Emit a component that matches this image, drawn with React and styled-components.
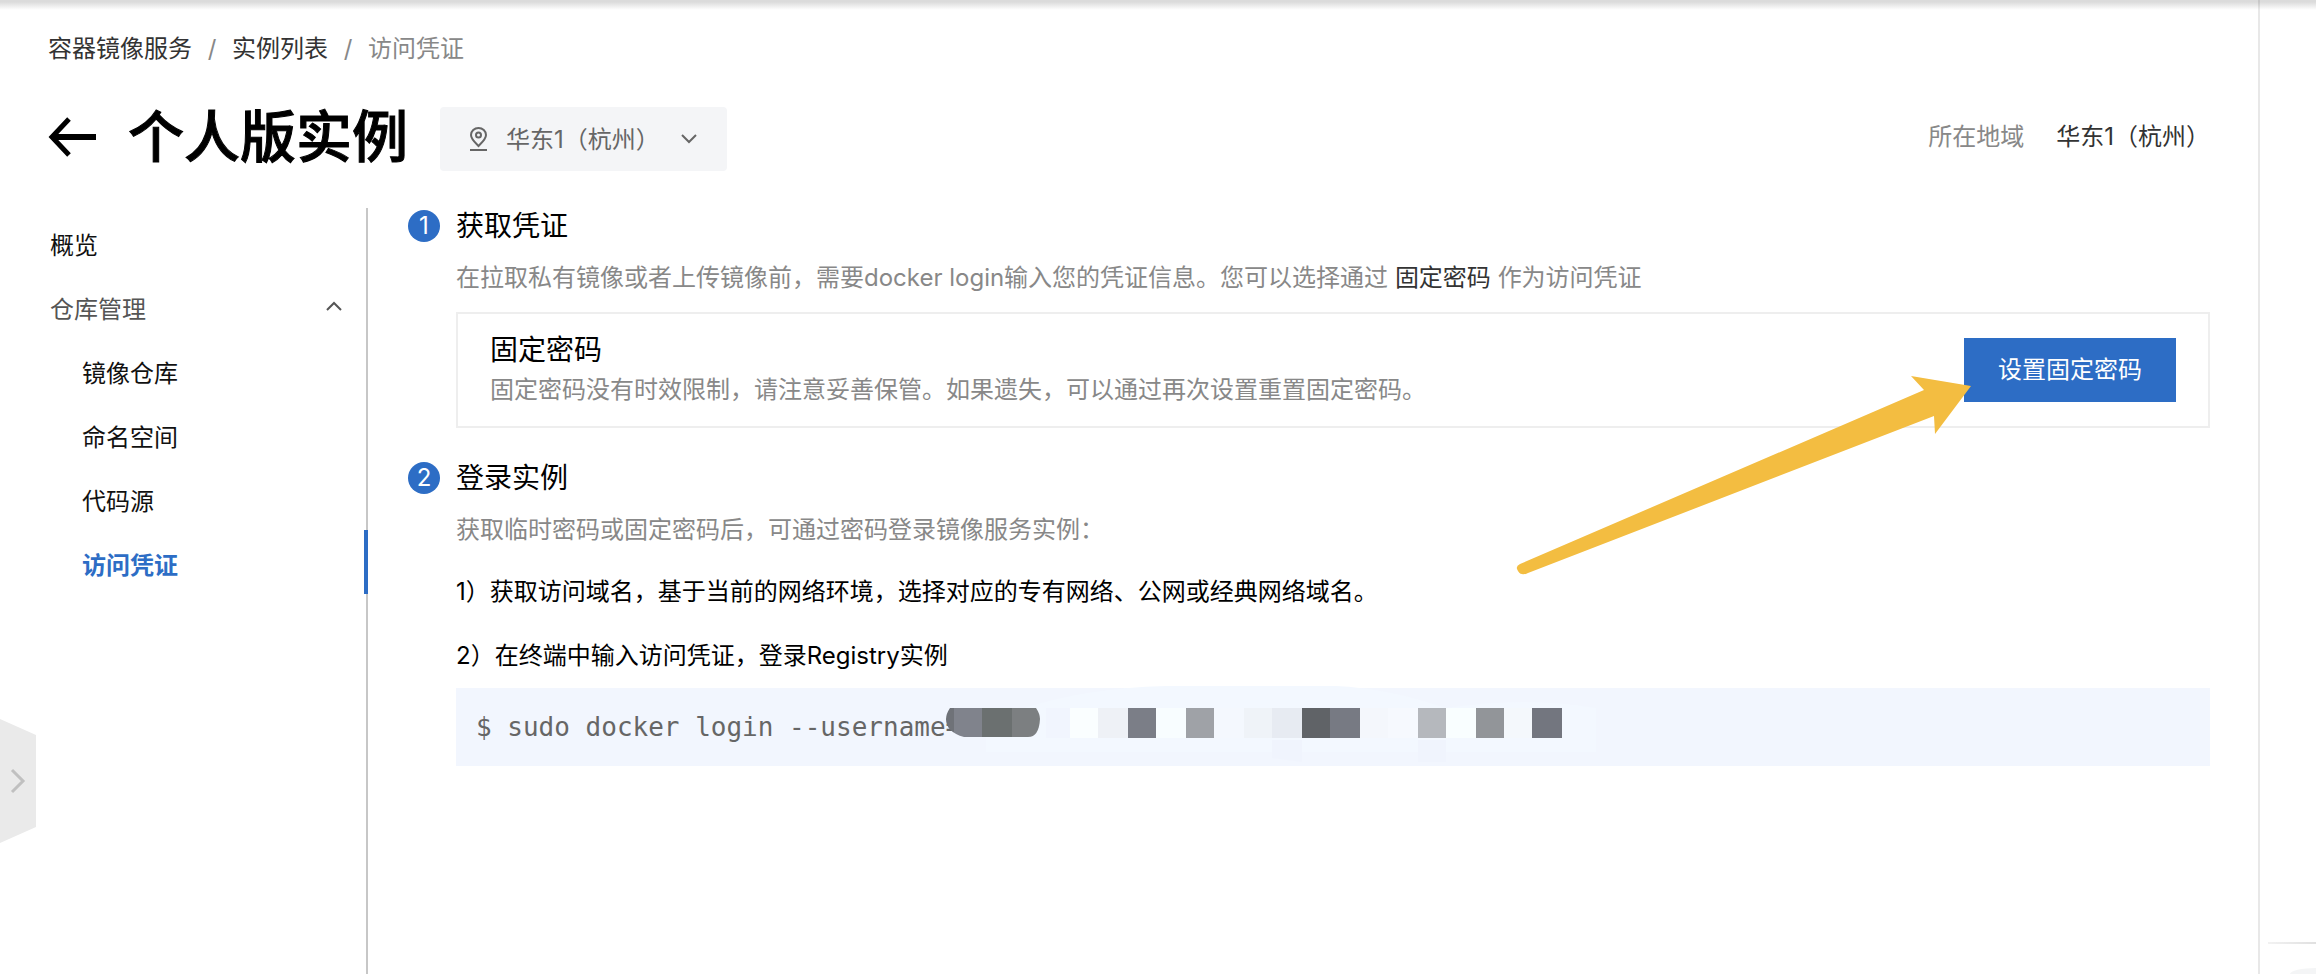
import React, { useState } from 'react';
import styled, { createGlobalStyle } from 'styled-components';

const nestedLinks = ['镜像仓库', '命名空间', '代码源', '访问凭证'];

// masked part of the login command: [x, width, colour]
const maskBlocks = [
	[100, 24, '#f1f5fe'],
	[124, 28, '#fafeff'],
	[152, 30, '#eef1f6'],
	[182, 28, '#7b7e87'],
	[210, 30, '#f8fdff'],
	[240, 28, '#9fa2a7'],
	[268, 30, '#f4f8fe'],
	[298, 28, '#eff3f8'],
	[326, 30, '#e7ebf2'],
	[356, 28, '#606367'],
	[384, 30, '#777a83'],
	[414, 28, '#f4f7fc'],
	[442, 30, '#f6f9fe'],
	[472, 28, '#b5b8bd'],
	[500, 30, '#f9feff'],
	[530, 28, '#929599'],
	[558, 28, '#f4f8fc'],
	[586, 30, '#73767f'],
];

function Mask() {
	return (
		<MaskSvg width="660" height="80" viewBox="0 0 660 80" aria-hidden="true">
			<path d="M40 36 Q120 2 220 0 H390 Q440 2 500 22 Q580 10 650 22 V66 H40 Z" fill="#f3f8ff" />
			<path d="M326 54 H356 V76 L326 72 Z" fill="#f0f4fd" />
			<path d="M472 54 H500 V76 H472 Z" fill="#f0f4fd" />
			<clipPath id="pill">
				<path d="M4 22 H90 Q94 28 94 33 Q93 51 82 51 H18 Q0 46 0 33 Q0 28 4 22 Z" />
			</clipPath>
			<g clipPath="url(#pill)">
				<rect x="0" y="22" width="8" height="30" fill="#6f7278" />
				<rect x="8" y="22" width="28" height="30" fill="#80838c" />
				<rect x="36" y="22" width="30" height="30" fill="#6b7070" />
				<rect x="66" y="22" width="28" height="30" fill="#7c7f81" />
			</g>
			{maskBlocks.map(([x, width, fill]) => (
				<rect key={x} x={x} y="22" width={width} height="30" fill={fill} />
			))}
		</MaskSvg>
	);
}

function Step({ number, title, description, children }) {
	return (
		<StepWrapper>
			<StepNumber>{number}</StepNumber>
			<StepBody>
				<StepTitle>{title}</StepTitle>
				<StepDescription>{description}</StepDescription>
				{children}
			</StepBody>
		</StepWrapper>
	);
}

export default function App() {
	const [isOpen, setIsOpen] = useState(true);
	const [active, setActive] = useState('访问凭证');

	return (
		<Page>
			<GlobalStyle />
			<TopShadow />
			<Main>
				<Breadcrumb aria-label="breadcrumb">
					<a href="#services">容器镜像服务</a>
					<span>/</span>
					<a href="#instances">实例列表</a>
					<span>/</span>
					<em>访问凭证</em>
				</Breadcrumb>

				<TitleRow>
					<BackButton type="button" aria-label="返回">
						<svg width="48" height="40" viewBox="0 0 48 40" fill="none" stroke="#000" strokeWidth="6">
							<path d="M48 20 H4" />
							<path d="M21 2 L4 20 L21 38" strokeWidth="5" />
						</svg>
					</BackButton>
					<h1>个人版实例</h1>
					<RegionPicker>
						<svg width="18" height="24" viewBox="0 0 18 24" fill="none" stroke="#666" strokeWidth="2">
							<path d="M8.500 19 C4.500 15 1 12 1 8 A7.500 7 0 0 1 16 8 C16 12 12.500 15 8.500 19 Z" />
							<circle cx="8.500" cy="8" r="2.500" />
							<path d="M0 23 H17" />
						</svg>
						<select aria-label="地域" defaultValue="hangzhou">
							<option value="hangzhou">华东1（杭州）</option>
						</select>
						<svg width="16" height="10" viewBox="0 0 16 10" fill="none" stroke="#666" strokeWidth="2">
							<path d="M1 1 L8 8 L15 1" />
						</svg>
					</RegionPicker>
					<RegionInfo>
						<dt>所在地域</dt>
						<dd>华东1（杭州）</dd>
					</RegionInfo>
				</TitleRow>

				<Columns>
					<SideNav>
						<NavLink href="#overview">
							<span>概览</span>
						</NavLink>
						<NavGroup type="button" aria-expanded={isOpen} onClick={() => setIsOpen(!isOpen)}>
							<span>仓库管理</span>
							<svg width="16" height="10" viewBox="0 0 16 10" fill="none" stroke="#555" strokeWidth="2">
								<path d={isOpen ? 'M1 9 L8 2 L15 9' : 'M1 1 L8 8 L15 1'} />
							</svg>
						</NavGroup>
						{isOpen &&
							nestedLinks.map(name => (
								<NavLink
									key={name}
									href={`#${name}`}
									$nested
									$active={name === active}
									onClick={() => setActive(name)}
								>
									<span>{name}</span>
								</NavLink>
							))}
					</SideNav>

					<Content>
						<Step
							number="1"
							title="获取凭证"
							description={
								<>
									在拉取私有镜像或者上传镜像前，需要docker login输入您的凭证信息。您可以选择通过{' '}
									<b>固定密码</b> 作为访问凭证
								</>
							}
						>
							<PasswordCard>
								<div>
									<h3>固定密码</h3>
									<p>固定密码没有时效限制，请注意妥善保管。如果遗失，可以通过再次设置重置固定密码。</p>
								</div>
								<ButtonWrapper>
									<PrimaryButton type="button">设置固定密码</PrimaryButton>
									<PointerArrow width="456" height="200" viewBox="0 0 456 200" aria-hidden="true">
										<path
											d="M455 10 L395 0 L408 14 L4 188 Q0 190 1 193 Q3 198 6 198 Q8 199 12 197 L418 40 L419 58 Z"
											fill="#f3bd41"
										/>
									</PointerArrow>
								</ButtonWrapper>
							</PasswordCard>
						</Step>

						<Step number="2" title="登录实例" description="获取临时密码或固定密码后，可通过密码登录镜像服务实例：">
							<Instructions>
								<p>1）获取访问域名，基于当前的网络环境，选择对应的专有网络、公网或经典网络域名。</p>
								<p>2）在终端中输入访问凭证，登录Registry实例</p>
							</Instructions>
							<CodeBlock>
								<code>$ sudo docker login --username=</code>
								<Mask />
							</CodeBlock>
						</Step>
					</Content>
				</Columns>
			</Main>

			<Rail>
				<RailDivider />
				<RailButton type="button" aria-label="帮助" />
			</Rail>

			<DrawerHandle type="button" aria-label="展开菜单">
				<svg width="36" height="124" viewBox="0 0 36 124">
					<path d="M0 0 L36 16 V108 L0 124 Z" fill="#eaeaea" />
					<path d="M12 51 L23 62 L12 73" fill="none" stroke="#c0c0c0" strokeWidth="3" />
				</svg>
			</DrawerHandle>
		</Page>
	);
}

const GlobalStyle = createGlobalStyle`
	* {
		box-sizing: border-box;
	}
	body {
		margin: 0;
		background-color: #fff;
		color: #000;
		font-family: Inter, 'Noto Sans CJK SC', sans-serif;
		font-size: 24px;
		line-height: 32px;
	}
	h1, h2, h3, p, dl, dd, pre {
		margin: 0;
	}
	a {
		color: inherit;
		text-decoration: none;
	}
	button, select {
		border: none;
		padding: 0;
		background: none;
		font: inherit;
		color: inherit;
		cursor: pointer;
	}
	svg {
		display: block;
		flex-shrink: 0;
	}
`;

const Page = styled.div`
	display: flex;
	position: relative;
	min-height: 100vh;
	overflow: hidden;
`;

const TopShadow = styled.div`
	position: absolute;
	top: 0;
	left: 0;
	right: 0;
	height: 10px;
	background: linear-gradient(rgba(0, 0, 0, 0.14) 20%, rgba(0, 0, 0, 0));
`;

const Main = styled.main`
	display: flex;
	flex-direction: column;
	flex: 1;
	min-width: 0;
	padding: 33px 48px 0 0;
`;

const Breadcrumb = styled.nav`
	display: flex;
	padding-left: 48px;
	color: #333;
	span {
		width: 40px;
		text-align: center;
		color: #888;
	}
	em {
		font-style: normal;
		color: #888;
	}
`;

const TitleRow = styled.header`
	display: flex;
	align-items: center;
	height: 64px;
	margin: 42px 0 37px;
	padding-left: 48px;
	h1 {
		margin: 0 32px 4px;
		font-size: 56px;
		font-weight: 500;
		line-height: 64px;
		white-space: nowrap;
		-webkit-text-stroke: 1px #000;
	}
`;

const BackButton = styled.button`
	display: flex;
	margin-bottom: 4px;
`;

const RegionPicker = styled.label`
	display: flex;
	align-items: center;
	width: 287px;
	height: 64px;
	padding: 0 30px;
	border-radius: 4px;
	background-color: #f4f5f7;
	color: #666;
	select {
		flex: 1;
		min-width: 0;
		margin-left: 18px;
		padding-top: 2px;
		appearance: none;
		line-height: 32px;
	}
`;

const RegionInfo = styled.dl`
	display: flex;
	gap: 32px;
	margin: 0 0 4px auto;
	dt {
		color: #888;
	}
	dd {
		color: #333;
	}
`;

const Columns = styled.div`
	display: flex;
	flex: 1;
`;

const SideNav = styled.nav`
	display: flex;
	flex-direction: column;
	flex-shrink: 0;
	width: 368px;
	padding-top: 2px;
	background: linear-gradient(#c7c7c7, #c7c7c7) right / 2px 100% no-repeat;
	span {
		padding-top: 8px;
	}
`;

const NavLink = styled.a`
	display: flex;
	align-items: center;
	height: 64px;
	padding-left: ${props => (props.$nested ? '82px' : '50px')};
	border-right: 4px solid ${props => (props.$active ? '#2d6dc5' : 'transparent')};
	color: ${props => (props.$active ? '#2d6dc5' : '#111')};
	font-weight: ${props => (props.$active ? 600 : 400)};
`;

const NavGroup = styled.button`
	display: flex;
	align-items: center;
	justify-content: space-between;
	height: 64px;
	padding: 0 26px 0 50px;
	color: #555;
`;

const Content = styled.div`
	display: flex;
	flex-direction: column;
	flex: 1;
	gap: 34px;
	min-width: 0;
	padding: 2px 0 48px 40px;
`;

const StepWrapper = styled.section`
	display: flex;
	gap: 16px;
`;

const StepNumber = styled.span`
	flex-shrink: 0;
	width: 32px;
	height: 32px;
	border-radius: 50%;
	background-color: #2d6dc5;
	color: #fff;
	text-align: center;
`;

const StepBody = styled.div`
	flex: 1;
	min-width: 0;
`;

const StepTitle = styled.h2`
	font-size: 28px;
	font-weight: 400;
`;

const StepDescription = styled.p`
	margin: 20px 0 18px;
	color: #888;
	b {
		font-weight: 400;
		color: #333;
	}
`;

const PasswordCard = styled.div`
	display: flex;
	align-items: center;
	justify-content: space-between;
	padding: 16px 32px;
	border: 2px solid #eee;
	h3 {
		font-size: 28px;
		font-weight: 400;
		line-height: 40px;
	}
	p {
		color: #888;
		line-height: 40px;
	}
`;

const ButtonWrapper = styled.div`
	position: relative;
	flex-shrink: 0;
`;

const PrimaryButton = styled.button`
	display: block;
	height: 64px;
	padding: 0 34px;
	background-color: #2d6dc5;
	color: #fff;
`;

const PointerArrow = styled.svg`
	position: absolute;
	top: 38px;
	right: 204px;
	pointer-events: none;
`;

const Instructions = styled.div`
	margin-top: -4px;
	line-height: 64px;
`;

const CodeBlock = styled.pre`
	position: relative;
	padding: 0 20px;
	background-color: #f2f6fe;
	color: #666;
	font-size: 26px;
	line-height: 78px;
	code {
		font-family: 'DejaVu Sans Mono', monospace;
	}
`;

const MaskSvg = styled.svg`
	position: absolute;
	top: -2px;
	left: 490px;
`;

const Rail = styled.aside`
	display: flex;
	flex-direction: column;
	justify-content: flex-end;
	flex-shrink: 0;
	width: 58px;
	border-left: 2px solid #e8e8e8;
`;

const RailDivider = styled.div`
	height: 2px;
	margin: 0 0 24px 8px;
	background: linear-gradient(to right, #f2f2f2, #e0e0e0);
`;

const RailButton = styled.button`
	height: 6px;
	margin-left: 30px;
	border-radius: 26px 0 0 0 / 6px 0 0 0;
	background-color: #f4f5f6;
`;

const DrawerHandle = styled.button`
	position: absolute;
	top: 719px;
	left: 0;
`;
